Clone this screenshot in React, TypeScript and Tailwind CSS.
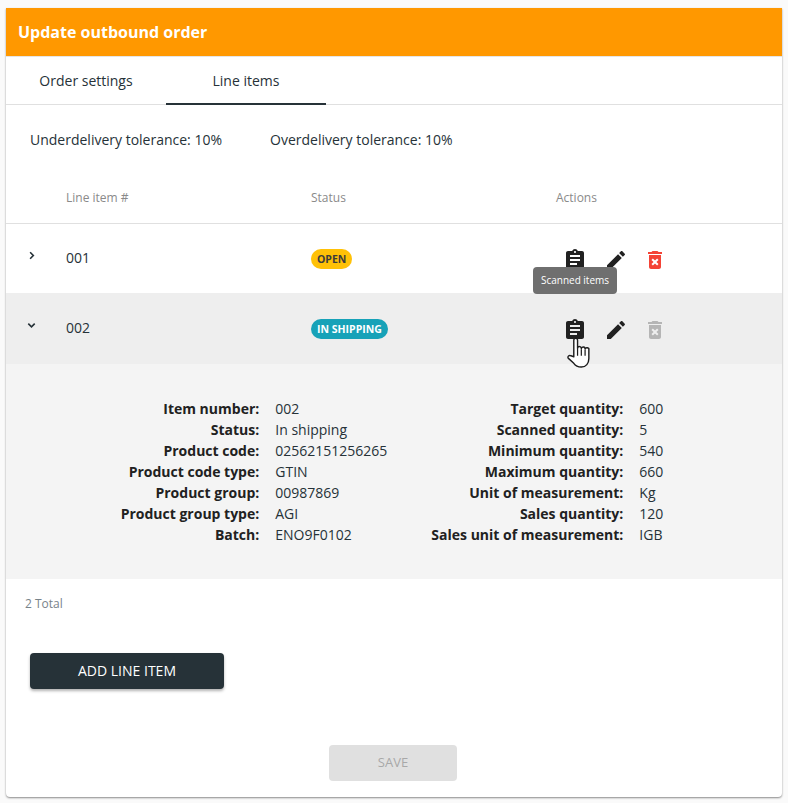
const ICONS = {
  assignment:
    "M19 3h-4.18C14.4 1.84 13.3 1 12 1c-1.3 0-2.4.84-2.82 2H5c-1.1 0-2 .9-2 2v14c0 1.1.9 2 2 2h14c1.1 0 2-.9 2-2V5c0-1.1-.9-2-2-2zm-7 0c.55 0 1 .45 1 1s-.45 1-1 1-1-.45-1-1 .45-1 1-1zm2 14H7v-2h7v2zm3-4H7v-2h10v2zm0-4H7V7h10v2z",
  edit: "M3 17.25V21h3.75L17.81 9.94l-3.75-3.75L3 17.25zM20.71 7.04c.39-.39.39-1.02 0-1.41l-2.34-2.34c-.39-.39-1.02-.39-1.41 0l-1.83 1.83 3.75 3.75 1.83-1.83z",
  trash:
    "M6 19c0 1.1.9 2 2 2h8c1.1 0 2-.9 2-2V7H6v12zm2.46-7.12l1.41-1.41L12 12.59l2.12-2.12 1.41 1.41L13.41 14l2.12 2.12-1.41 1.41L12 15.41l-2.12 2.12-1.41-1.41L10.59 14l-2.13-2.12zM15.5 4l-1-1h-5l-1 1H5v2h14V4z",
};

const LEFT_DETAILS = [
  ["Item number:", "002"],
  ["Status:", "In shipping"],
  ["Product code:", "02562151256265"],
  ["Product code type:", "GTIN"],
  ["Product group:", "00987869"],
  ["Product group type:", "AGI"],
  ["Batch:", "ENO9F0102"],
];

const RIGHT_DETAILS = [
  ["Target quantity:", "600"],
  ["Scanned quantity:", "5"],
  ["Minimum quantity:", "540"],
  ["Maximum quantity:", "660"],
  ["Unit of measurement:", "Kg"],
  ["Sales quantity:", "120"],
  ["Sales unit of measurement:", "IGB"],
];

function Icon({ d, className }: { d: string; className: string }) {
  return (
    <svg viewBox="0 0 24 24" className={`h-6 w-6 fill-current ${className}`}>
      <path d={d} />
    </svg>
  );
}

function Actions({ trashClass }: { trashClass: string }) {
  return (
    <div className="flex items-center pt-0.5 pl-[7px]">
      <div className="flex w-[41px]">
        <Icon d={ICONS.assignment} className="text-[#212121]" />
      </div>
      <div className="flex w-[39px]">
        <Icon d={ICONS.edit} className="text-[#212121]" />
      </div>
      <Icon d={ICONS.trash} className={trashClass} />
    </div>
  );
}

function DetailGrid({ rows }: { rows: string[][] }) {
  return (
    <div className="grid grid-cols-[auto_auto] content-start gap-x-4 text-sm leading-[21px] text-[#263238]">
      {rows.map(([label, value]) => (
        <div key={label} className="contents">
          <span className="text-right font-bold text-[#212121]">{label}</span>
          <span>{value}</span>
        </div>
      ))}
    </div>
  );
}

function HandCursor() {
  return (
    <svg viewBox="0 0 28 34" className="absolute left-[565px] top-[336px] h-[32px] w-[27px]">
      <path
        d="M9 22V4.5a2 2 0 0 1 4 0V13a2 2 0 0 1 4 .5a2 2 0 0 1 4 .5a2 2 0 0 1 4 1V24c0 5-3 9-8 9c-4 0-6-1-8-4l-6-5.500c-1-1.500 1-3.500 3-2.500z"
        fill="#fff"
        stroke="#1c1c1c"
        strokeWidth="1.500"
        strokeLinejoin="round"
      />
      <path d="M13 13v8M17 14v7M21 15v6" fill="none" stroke="#1c1c1c" strokeWidth="1.300" />
    </svg>
  );
}

export default function App() {
  return (
    <div className="relative min-h-[803px] bg-[#fafafa] px-1.5 pt-2 font-['Open_Sans',sans-serif] text-[#263238]">
      <div className="h-[789px] overflow-hidden rounded-b bg-white shadow-[0_1px_2px_rgba(0,0,0,0.45)]">
        <div className="flex h-12 items-center bg-[#ff9800] pl-3 text-base font-bold text-white">
          Update outbound order
        </div>

        <div className="flex h-[49px] border-t border-b border-t-[#e5e5e5] border-b-[#e0e0e0] text-sm">
          <div className="flex w-40 items-center justify-center">Order settings</div>
          <div className="-mb-px flex w-40 items-center justify-center border-b-2 border-[#263238] pt-0.5">
            Line items
          </div>
        </div>

        <div className="flex gap-12 pt-[25px] pl-6 text-sm leading-[19px]">
          <span>Underdelivery tolerance: 10%</span>
          <span>Overdelivery tolerance: 10%</span>
        </div>

        <div className="mt-[32px] grid h-[43px] grid-cols-[60px_245px_245px_1fr] border-b border-[#e0e0e0] pt-[9px] text-xs text-[#8a8a8a]">
          <span />
          <span>Line item #</span>
          <span>Status</span>
          <span>Actions</span>
        </div>

        <div className="grid h-[69px] grid-cols-[60px_245px_245px_1fr] items-center text-sm">
          <svg viewBox="0 0 24 24" className="mb-1.5 ml-[20px] h-[11px] w-[11px] fill-none stroke-[#263238] stroke-[3.500]">
            <path d="M9 5l7 7-7 7" />
          </svg>
          <span className="mb-0.5">001</span>
          <div className="flex">
            <span className="rounded-full bg-[#ffc107] px-1.5 text-[10.500px] leading-5 font-bold text-[#3b3b3b]">
              OPEN
            </span>
          </div>
          <Actions trashClass="text-[#f44336]" />
        </div>

        <div className="grid h-[71px] grid-cols-[60px_245px_245px_1fr] items-center bg-[#eeeeee] text-sm">
          <svg viewBox="0 0 24 24" className="mb-1.5 ml-[20px] h-[11px] w-[11px] fill-none stroke-[#263238] stroke-[3.500]">
            <path d="M5 8l7 7 7-7" />
          </svg>
          <span className="mb-0.5">002</span>
          <div className="flex">
            <span className="rounded-full bg-[#17a2b8] px-1.5 text-[10.500px] leading-5 font-bold text-white">
              IN SHIPPING
            </span>
          </div>
          <Actions trashClass="text-[#b5b5b5]" />
        </div>

        <div className="flex h-[215px] justify-center gap-11 bg-[#f4f4f4] pt-[34px] pr-1">
          <DetailGrid rows={LEFT_DETAILS} />
          <DetailGrid rows={RIGHT_DETAILS} />
        </div>

        <p className="pt-[17px] pl-[19px] text-xs leading-4 text-[#78838a]">2 Total</p>

        <button className="mt-[41px] ml-6 block h-9 w-[194px] rounded bg-[#263238] text-sm font-medium text-white shadow-[0_2px_3px_rgba(0,0,0,0.3)]">
          ADD LINE ITEM
        </button>

        <button className="mt-14 ml-[323px] block h-9 w-32 rounded bg-[#e0e0e0] text-[13px] text-[#a8a8a8]">
          SAVE
        </button>
      </div>

      <div className="absolute left-[533px] top-[267px] flex h-[27px] w-[84px] items-center justify-center rounded bg-[#6f6f6f] text-[10px] text-white">
        Scanned items
      </div>
      <HandCursor />
    </div>
  );
}
